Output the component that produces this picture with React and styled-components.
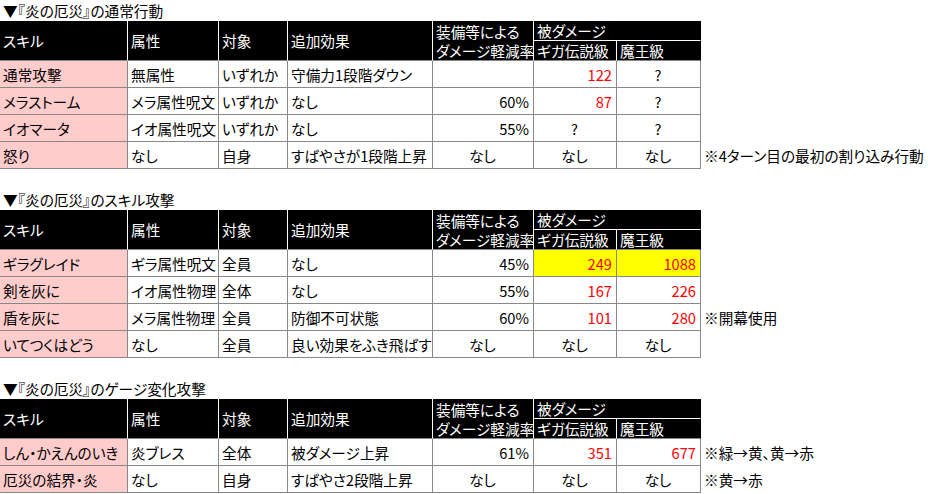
import React from 'react';
import styled, { createGlobalStyle } from 'styled-components';

const GlobalStyle = createGlobalStyle`
  html, body { margin: 0; padding: 0; background: #fff; }
  body {
    font-family: "Noto Sans CJK JP", "Noto Sans", sans-serif;
    font-size: 14.67px;
    color: #000;
    font-feature-settings: "palt";
  }
`

const Page = styled.div`
  display: flex;
  flex-direction: column;
  gap: 20px;
  width: 928px;
`
const Section = styled.section`display: flex; flex-direction: column;`
const Title = styled.div`
  height: 21px;
  display: flex;
  align-items: flex-end;
  padding: 0 0 1px 3px;
  box-sizing: border-box;
  line-height: 18px;
  white-space: nowrap;
`
const Grid = styled.div`
  display: grid;
  grid-template-columns: 128px 91px 69px 145px 101px 83px 84px auto;
  grid-template-rows: 20px 20px;
  grid-auto-rows: 27px;
`
const HeadCell = styled.div`
  grid-row: ${p => p.$row} / span ${p => p.$rows || 1};
  grid-column: ${p => p.$col} / span ${p => p.$cols || 1};
  background: #000;
  color: #fff;
  box-sizing: border-box;
  border-right: 1px solid ${p => p.$last ? '#000' : '#fff'};
  border-bottom: 1px solid ${p => p.$line ? '#fff' : '#888'};
  padding: 0 3px;
  display: flex;
  flex-direction: column;
  justify-content: center;
  line-height: 19px;
  white-space: nowrap;
  overflow: hidden;
`
// keeps the header rows' last column taken, so data rows start below the header
const HeadGap = styled.div`grid-row: 1 / span 2; grid-column: 8;`
const Cell = styled.div`
  box-sizing: border-box;
  border-right: 1px solid #888;
  border-bottom: 1px solid #888;
  background: ${p => p.$bg || '#fff'};
  color: ${p => p.$red ? '#ff0000' : '#000'};
  padding: 0 4px 0 3px;
  display: flex;
  align-items: center;
  justify-content: ${p => p.$align === 'right' ? 'flex-end' : p.$align === 'center' ? 'center' : 'flex-start'};
  white-space: nowrap;
`
const Note = styled.div`
  display: flex;
  align-items: center;
  padding-left: 3px;
  white-space: nowrap;
`

const PINK = '#ffcccc'
const YELLOW = '#ffff00'

function Header() {
  return (
    <>
      <HeadCell $row={1} $rows={2} $col={1}>スキル</HeadCell>
      <HeadCell $row={1} $rows={2} $col={2}>属性</HeadCell>
      <HeadCell $row={1} $rows={2} $col={3}>対象</HeadCell>
      <HeadCell $row={1} $rows={2} $col={4}>追加効果</HeadCell>
      <HeadCell $row={1} $rows={2} $col={5}>
        <span>装備等による</span>
        <span>ダメージ軽減率</span>
      </HeadCell>
      <HeadCell $row={1} $col={6} $cols={2} $line $last>被ダメージ</HeadCell>
      <HeadCell $row={2} $col={6}>ギガ伝説級</HeadCell>
      <HeadCell $row={2} $col={7} $last>魔王級</HeadCell>
      <HeadGap />
    </>
  )
}

// value cell: numbers to the right, words and "?" centred
function Val({ v, red, bg }) {
  const numeric = /\d/.test(v)
  return <Cell $align={numeric ? 'right' : 'center'} $red={red} $bg={bg}>{v}</Cell>
}

function Row({ r }) {
  return (
    <>
      <Cell $bg={PINK}>{r.skill}</Cell>
      <Cell>{r.attr}</Cell>
      <Cell>{r.target}</Cell>
      <Cell>{r.effect}</Cell>
      <Val v={r.cut} />
      <Val v={r.giga} red={/\d/.test(r.giga)} bg={r.hl ? YELLOW : undefined} />
      <Val v={r.maou} red={/\d/.test(r.maou)} bg={r.hl ? YELLOW : undefined} />
      <Note>{r.note}</Note>
    </>
  )
}

const sections = [
  {
    title: '▼『炎の厄災』の通常行動',
    rows: [
      { skill: '通常攻撃', attr: '無属性', target: 'いずれか', effect: '守備力1段階ダウン', cut: '', giga: '122', maou: '?' },
      { skill: 'メラストーム', attr: 'メラ属性呪文', target: 'いずれか', effect: 'なし', cut: '60%', giga: '87', maou: '?' },
      { skill: 'イオマータ', attr: 'イオ属性呪文', target: 'いずれか', effect: 'なし', cut: '55%', giga: '?', maou: '?' },
      { skill: '怒り', attr: 'なし', target: '自身', effect: 'すばやさが1段階上昇', cut: 'なし', giga: 'なし', maou: 'なし', note: '※4ターン目の最初の割り込み行動' },
    ],
  },
  {
    title: '▼『炎の厄災』のスキル攻撃',
    rows: [
      { skill: 'ギラグレイド', attr: 'ギラ属性呪文', target: '全員', effect: 'なし', cut: '45%', giga: '249', maou: '1088', hl: true },
      { skill: '剣を灰に', attr: 'イオ属性物理', target: '全体', effect: 'なし', cut: '55%', giga: '167', maou: '226' },
      { skill: '盾を灰に', attr: 'メラ属性物理', target: '全員', effect: '防御不可状態', cut: '60%', giga: '101', maou: '280', note: '※開幕使用' },
      { skill: 'いてつくはどう', attr: 'なし', target: '全員', effect: '良い効果をふき飛ばす', cut: 'なし', giga: 'なし', maou: 'なし' },
    ],
  },
  {
    title: '▼『炎の厄災』のゲージ変化攻撃',
    rows: [
      { skill: 'しん・かえんのいき', attr: '炎ブレス', target: '全体', effect: '被ダメージ上昇', cut: '61%', giga: '351', maou: '677', note: '※緑→黄、黄→赤' },
      { skill: '厄災の結界・炎', attr: 'なし', target: '自身', effect: 'すばやさ2段階上昇', cut: 'なし', giga: 'なし', maou: 'なし', note: '※黄→赤' },
    ],
  },
]

export default function App() {
  return (
    <>
      <GlobalStyle />
      <Page>
        {sections.map(s => (
          <Section key={s.title}>
            <Title>{s.title}</Title>
            <Grid>
              <Header />
              {s.rows.map(r => <Row key={r.skill} r={r} />)}
            </Grid>
          </Section>
        ))}
      </Page>
    </>
  )
}
